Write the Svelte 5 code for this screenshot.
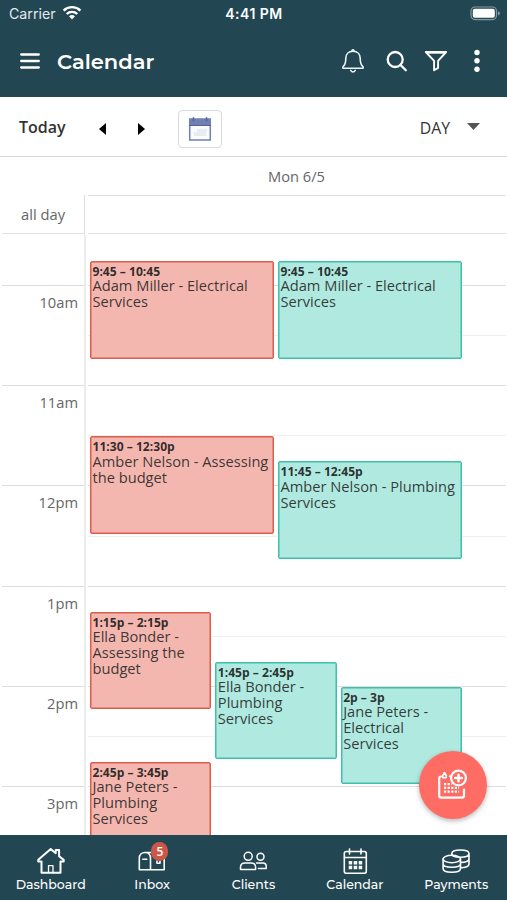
<script>
    const HOUR = 100.2;
    const START = 9.5;
    const LANES = 376;

    const slots = [
        { label: "" },
        { label: "10am" }, { half: true },
        { label: "11am" }, { half: true },
        { label: "12pm" }, { half: true },
        { label: "1pm" }, { half: true },
        { label: "2pm" }, { half: true },
        { label: "3pm" },
    ];

    const events = [
        { time: "9:45 – 10:45", title: "Adam Miller - Electrical Services", at: 9.75, lane: 0, of: 2, kind: "red" },
        { time: "9:45 – 10:45", title: "Adam Miller - Electrical Services", at: 9.75, lane: 1, of: 2, kind: "teal" },
        { time: "11:30 – 12:30p", title: "Amber Nelson - Assessing the budget", at: 11.5, lane: 0, of: 2, kind: "red" },
        { time: "11:45 – 12:45p", title: "Amber Nelson - Plumbing Services", at: 11.75, lane: 1, of: 2, kind: "teal" },
        { time: "1:15p – 2:15p", title: "Ella Bonder - Assessing the budget", at: 13.25, lane: 0, of: 3, kind: "red" },
        { time: "1:45p – 2:45p", title: "Ella Bonder - Plumbing Services", at: 13.75, lane: 1, of: 3, kind: "teal" },
        { time: "2p – 3p", title: "Jane Peters - Electrical Services", at: 14, lane: 2, of: 3, kind: "teal" },
        { time: "2:45p – 3:45p", title: "Jane Peters - Plumbing Services", at: 14.75, lane: 0, of: 3, kind: "red" },
    ];

    const tabs = ["Dashboard", "Inbox", "Clients", "Calendar", "Payments"];

    function place(e) {
        const top = (e.at - START) * HOUR + 0.8;
        const left = 2 + (e.lane * LANES) / e.of;
        const width = LANES / e.of - 4;
        return `top:${top}px;left:${left}px;width:${width}px;height:${HOUR - 2.5}px`;
    }
</script>

<div class="screen">
    <header>
        <div class="status">
            <div class="carrier">
                <span>Carrier</span>
                <svg width="20" height="15" viewBox="0 0 20 15">
                    <g fill="none" stroke="#fff" stroke-width="2.4">
                        <path d="M1.6 5.6a12 12 0 0 1 16.8 0" />
                        <path d="M4.7 9a7.7 7.7 0 0 1 10.6 0" />
                    </g>
                    <path d="M7 11.3a4.4 4.4 0 0 1 6 0L10 14.4z" fill="#fff" />
                </svg>
            </div>
            <div class="clock">4:41 PM</div>
            <svg class="battery" width="31" height="15" viewBox="0 0 31 15">
                <rect x="1" y="1" width="25.5" height="12.6" rx="4" fill="none" stroke="#8499a0" stroke-width="1.2" />
                <rect x="2.8" y="2.8" width="22" height="9" rx="2" fill="#fff" />
                <path d="M28 5.2q2 .7 2 2.1t-2 2.1z" fill="#8499a0" />
            </svg>
        </div>
        <div class="appbar">
            <svg class="menu" width="20" height="16" viewBox="0 0 20 16" fill="none" stroke="#fff" stroke-width="2.3" stroke-linecap="round">
                <path d="M1.2 1.5h17.6M1.2 8h17.6M1.2 14.5h17.6" />
            </svg>
            <h1>Calendar</h1>
            <div class="actions">
                <svg width="24" height="26" viewBox="0 0 24 26" fill="none" stroke="#edf6f8" stroke-width="1.6" stroke-linejoin="round" stroke-linecap="round">
                    <path d="M12 3.2c-4.5 0-7.2 3-7.2 7 0 4.5-.6 6.3-2.4 8.1-1 1-.6 2 .4 2h18.4c1 0 1.4-1 .4-2-1.8-1.8-2.4-3.6-2.4-8.1 0-4-2.7-7-7.2-7z" />
                    <path d="M11 3v-.6q1-1.2 2 0V3M9.7 22.4q2.3 3.2 4.6 0" />
                </svg>
                <svg width="22" height="22" viewBox="0 0 22 22" fill="none" stroke="#fff" stroke-width="2.3" stroke-linecap="round">
                    <circle cx="9.2" cy="9.5" r="7.5" />
                    <path d="M14.8 15.2l5 5" />
                </svg>
                <svg width="24" height="22" viewBox="0 0 24 22" fill="none" stroke="#fff" stroke-width="1.9" stroke-linejoin="round">
                    <path d="M1.8 2h20.3l-8 8.8v7.2l-4 2.2v-9.4z" />
                    <path d="M4 3.2h16" stroke-width="1" />
                </svg>
                <svg width="6" height="24" viewBox="0 0 6 24" fill="#fff">
                    <circle cx="3" cy="3.5" r="2.7" /><circle cx="3" cy="11.8" r="2.7" /><circle cx="3" cy="20.2" r="2.7" />
                </svg>
            </div>
        </div>
    </header>

    <div class="toolbar">
        <span class="today">Today</span>
        <svg class="prev" width="7" height="12" viewBox="0 0 7 12"><path d="M7 0v12L0 6z" /></svg>
        <svg class="next" width="7" height="12" viewBox="0 0 7 12"><path d="M0 0v12l7-6z" /></svg>
        <button class="pick" aria-label="Pick a date">
            <svg width="24" height="26" viewBox="0 0 24 26">
                <rect x="1.7" y="3" width="20.6" height="21" fill="#fafbfe" stroke="#7180b2" stroke-width="1.5" />
                <path d="M1 3h22v7H1z" fill="#7180b2" />
                <path d="M1 9.5h22" stroke="#53629b" />
                <path d="M5.5 1.2v4M18.5 1.2v4" stroke="#53629b" stroke-width="1.5" />
                <path d="M9 13h10v3h-1v4H6v-4h3z" fill="#e9edf0" />
            </svg>
        </button>
        <span class="view">DAY</span>
        <svg class="caret" width="13" height="7" viewBox="0 0 13 7"><path d="M0 0h13L6.5 7z" fill="#555" /></svg>
    </div>

    <div class="dayhead"><span>Mon 6/5</span></div>
    <div class="allday"><span>all day</span><div></div></div>

    <main>
        <div class="hours">
            {#each slots as slot}
                <div class="slot" class:line={slot.label}>{slot.label ?? ""}</div>
            {/each}
        </div>
        <div class="day">
            {#each slots as slot}
                <div class="slot" class:line={slot.label} class:half={slot.half}></div>
            {/each}
            {#each events as e}
                <div class="event {e.kind}" style={place(e)}>
                    <b>{e.time}</b>
                    <div>{e.title}</div>
                </div>
            {/each}
        </div>
    </main>

    <nav>
        {#each tabs as tab}
            <div class="tab">
                <svg width="30" height="28" viewBox="0 0 30 28" fill="none" stroke="#fff" stroke-width="1.6" stroke-linejoin="round" stroke-linecap="round">
                    {#if tab === "Dashboard"}
                        <path stroke-width="2" d="M5.5 14.5v11.3h19V14.5M5.5 14.5H2.3v-1.8L14.7 2l5 4.2V3h3.4v6.3l4.6 3.6v1.6h-3.2" />
                        <path stroke-width="1.3" d="M12.5 25.5v-6.8H17v6.8" />
                    {:else if tab === "Inbox"}
                        <path d="M8 5.5h13.5c3.2 0 5.7 2.5 5.7 5.7v11.6H2.3V11.2c0-3.2 2.3-5.7 5.7-5.7s5.5 2.5 5.5 5.7v11.4M5.8 12.2h4M20 14v2.3h3V14" />
                    {:else if tab === "Clients"}
                        <g stroke-width="1.5">
                            <circle cx="10.2" cy="9.3" r="4" />
                            <path d="M2.5 22.5v-2.3c0-2.8 1.8-4.3 4.3-4.3h6.5c2.5 0 4.3 1.5 4.3 4.3v2.3z" />
                            <circle cx="22.5" cy="9.8" r="3.5" />
                            <path d="M18.5 15.9h6.4c2 0 3.3 1.3 3.3 3.4v2.3h-7.7" />
                        </g>
                    {:else if tab === "Calendar"}
                        <rect x="4.3" y="4.5" width="22" height="21.8" rx="2" />
                        <path d="M4.5 10.5h21.6M9.5 2v5M21 2v5" />
                        <path fill="#fff" stroke="none" d="M8.7 14h3.5v3.5H8.7zM13.7 14h3.5v3.5h-3.5zM18.7 14h3.5v3.5h-3.5zM8.7 18.8h3.5v3.5H8.7zM13.7 18.8h3.5v3.5h-3.5zM18.7 18.8h3.5v3.5h-3.5z" />
                    {:else}
                        <ellipse cx="10.8" cy="12" rx="8.7" ry="3.7" />
                        <path d="M2.1 12v9.5c0 5 17.4 5 17.4 0V12M2.1 16.7c0 4.7 17.4 4.7 17.4 0" />
                        <path d="M10.8 8.3V6.5c0-4.7 17.2-4.7 17.2 0v10.6c0 2.3-3.5 3.6-8.5 3.6M10.8 6.5c0 3.2 3.5 3.8 8.5 3.8 4.8 0 8.7-1.3 8.7-3.8M28 11.8c0 2.4-4 3.6-8.5 3.6" />
                    {/if}
                </svg>
                {#if tab === "Inbox"}<span class="badge">5</span>{/if}
                <span class="name">{tab}</span>
            </div>
        {/each}
    </nav>

    <button class="fab" aria-label="New event">
        <svg width="32" height="32" viewBox="0 0 32 32" fill="none" stroke="#fff" stroke-width="2.2" stroke-linecap="round" stroke-linejoin="round">
            <path d="M4 7.5Q2.2 7.5 2.2 9.5v17Q2.2 28.6 4.3 28.6h20.5q2.2 0 2.2-2.1v-6" />
            <path d="M7.5 3.5L5.8 6.5v2.3h3.4V6.5zM12.5 7.2h1" stroke-width="1.6" />
            <circle cx="21.5" cy="9" r="7.4" />
            <path d="M21.5 5.6v6.8M18.1 9h6.8" stroke-width="2.4" />
            <path d="M7 15.2h7.9M7 18.9h15.1M7 22.6h15.1" stroke-width="2.2" stroke-dasharray="2.2 1.4" stroke-linecap="butt" />
        </svg>
    </button>
</div>

<style>
    :global(body) { background: #fff; }
    .screen {
        position: relative;
        display: flex;
        flex-direction: column;
        width: 507px;
        height: 900px;
        overflow: hidden;
        background: #fff;
        color: #333;
        font-family: "Open Sans", sans-serif;
    }
    header {
        height: 97px;
        flex: none;
        background: #234653;
        color: #fff;
    }
    .status {
        display: grid;
        grid-template-columns: 1fr auto 1fr;
        align-items: center;
        height: 27px;
        padding: 0 6px 0 9px;
        font-family: Inter, sans-serif;
    }
    .carrier {
        display: flex;
        align-items: center;
        gap: 6px;
        color: #e3eaed;
        font-size: 14.2px;
    }
    .carrier svg { margin-top: -2px; }
    .clock {
        margin-left: -2px;
        font-size: 14px;
        font-weight: 600;
        letter-spacing: 0.5px;
    }
    .battery { justify-self: end; }
    .appbar {
        display: flex;
        align-items: center;
        height: 68px;
        padding: 0 27px 0 20px;
    }
    h1 {
        margin: 2px 0 0 17px;
        font-family: Montserrat, "Open Sans", sans-serif;
        font-size: 21px;
        font-weight: 600;
        line-height: 28px;
    }
    .actions {
        display: flex;
        align-items: center;
        margin-left: auto;
    }
    .actions svg:nth-child(2) { margin-left: 21px; }
    .actions svg:nth-child(3) { margin-left: 16px; }
    .actions svg:nth-child(4) { margin-left: 26px; }
    .toolbar {
        display: flex;
        align-items: center;
        flex: none;
        height: 60px;
        box-sizing: border-box;
        padding: 4px 27px 0 19px;
        border-bottom: 1px solid #d8d8d8;
    }
    .today {
        width: 80px;
        margin-top: -4px;
        font-size: 16px;
        font-weight: 600;
    }
    .next { margin-left: 32px; }
    .pick {
        display: grid;
        place-items: center;
        width: 44px;
        height: 38px;
        margin-left: 33px;
        padding: 0;
        border: 1px solid #d8d9de;
        border-radius: 4px;
        background: #fff;
    }
    .view {
        margin: -2px 17px 0 auto;
        font-size: 15.8px;
    }
    .caret { margin-top: -5px; }
    .dayhead {
        display: flex;
        flex: none;
        height: 38px;
        align-items: center;
        justify-content: center;
        padding: 0 0 0 86px;
        box-sizing: border-box;
        color: #666;
        font-size: 14.7px;
    }
    .allday {
        display: flex;
        flex: none;
        height: 39px;
        gap: 3px;
        padding: 0 1px 0 2px;
        color: #666;
        font-size: 14.7px;
    }
    .allday span {
        box-sizing: border-box;
        width: 83px;
        padding: 0 19px 0 0;
        border-right: 1px solid #dcdcdc;
        border-bottom: 1px solid #e2e2e2;
        line-height: 38px;
        text-align: right;
    }
    .allday div {
        flex: 1;
        border-top: 1px solid #e0e0e0;
        border-bottom: 1px solid #e2e2e2;
    }
    main {
        display: flex;
        flex: 1;
        min-height: 0;
        gap: 2px;
        margin-top: 1px;
        padding: 0 1px 0 2px;
        overflow: hidden;
    }
    .hours {
        flex: none;
        width: 82px;
        height: 602px;
        border-right: 2px solid #ececec;
        color: #666;
        font-size: 14.7px;
        text-align: right;
    }
    .slot {
        box-sizing: border-box;
        height: 50.1px;
        line-height: 33px;
    }
    .hours .slot { padding-right: 6px; }
    .line { border-top: 1px solid #dedede; }
    .half { border-top: 1px solid #f0f0f0; }
    .day {
        position: relative;
        flex: 1;
    }
    .event {
        position: absolute;
        box-sizing: border-box;
        padding: 1px 1px 0 1.5px;
        overflow: hidden;
        border: 1px solid;
        border-radius: 2px;
        color: rgba(35, 35, 35, 0.88);
        font-size: 14.65px;
        line-height: 15.9px;
    }
    .event b {
        display: block;
        height: 15.5px;
        color: rgba(25, 25, 25, 0.9);
        font-size: 12.1px;
        line-height: 17px;
    }
    .red {
        border-color: #db5d4c;
        background: #f4b7af;
        box-shadow: inset 0 0 0 0.5px #db5d4c;
    }
    .teal {
        border-color: #3fc0ac;
        background: #afe9df;
        box-shadow: inset 0 0 0 0.5px #3fc0ac;
    }
    nav {
        display: grid;
        grid-template-columns: repeat(5, 1fr);
        flex: none;
        height: 65px;
        background: #234653;
        color: #fff;
    }
    .tab {
        position: relative;
        display: flex;
        flex-direction: column;
        align-items: center;
        padding-top: 12px;
    }
    .name {
        margin-top: 1px;
        font-family: Montserrat, "Open Sans", sans-serif;
        font-size: 12.5px;
        font-weight: 500;
        line-height: 18px;
    }
    .badge {
        position: absolute;
        top: 7px;
        left: 50px;
        width: 17px;
        height: 19px;
        border-radius: 9px;
        background: #cd5747;
        font-size: 12px;
        font-weight: 600;
        line-height: 19px;
        text-align: center;
    }
    .fab {
        position: absolute;
        right: 20px;
        bottom: 81px;
        display: grid;
        place-items: center;
        width: 68px;
        height: 68px;
        padding: 0;
        border: 0;
        border-radius: 50%;
        background: #ff6c64;
        box-shadow: 0 2px 5px rgba(0, 0, 0, 0.28);
    }
</style>
